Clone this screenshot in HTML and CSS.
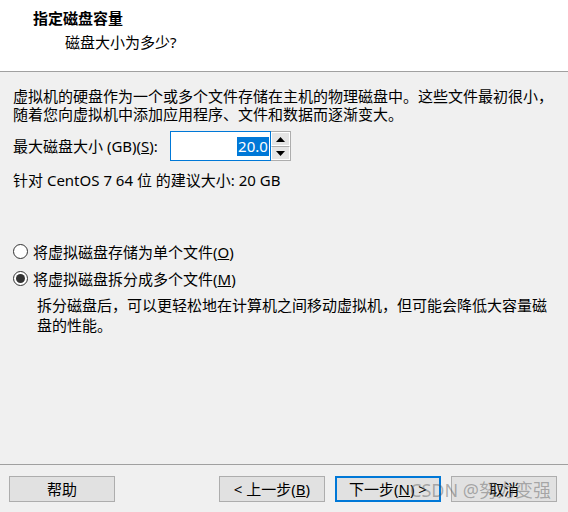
FILE: index.html
```html
<!DOCTYPE html>
<html lang="zh-CN">
<head>
<meta charset="utf-8">
<title>指定磁盘容量</title>
<link rel="stylesheet" href="styles.css">
</head>
<body>
<div class="dialog">
  <header class="header">
    <div class="title">指定磁盘容量</div>
    <div class="subtitle">磁盘大小为多少?</div>
  </header>
  <main class="content">
    <p class="intro">虚拟机的硬盘作为一个或多个文件存储在主机的物理磁盘中。这些文件最初很小，<br>随着您向虚拟机中添加应用程序、文件和数据而逐渐变大。</p>
    <div class="size-row">
      <label class="size-label">最大磁盘大小 (GB)(<u>S</u>):</label>
      <div class="spin">
        <div class="spin-input"><span class="sel">20.0</span></div>
        <div class="spin-buttons">
          <div class="spin-btn"><svg width="9" height="5" viewBox="0 0 9 5"><path d="M0 5 L4.5 0 L9 5 Z" fill="#000"/></svg></div>
          <div class="spin-btn"><svg width="9" height="5" viewBox="0 0 9 5"><path d="M0 0 L9 0 L4.5 5 Z" fill="#000"/></svg></div>
        </div>
      </div>
    </div>
    <p class="recommend">针对 CentOS 7 64 位 的建议大小: 20 GB</p>
    <div class="options">
      <div class="radio-row"><span class="radio"></span><span>将虚拟磁盘存储为单个文件(<u>O</u>)</span></div>
      <div class="radio-row"><span class="radio checked"></span><span>将虚拟磁盘拆分成多个文件(<u>M</u>)</span></div>
      <p class="note">拆分磁盘后，可以更轻松地在计算机之间移动虚拟机，但可能会降低大容量磁<br>盘的性能。</p>
    </div>
  </main>
  <footer class="footer">
    <button class="btn">帮助</button>
    <div class="spacer"></div>
    <button class="btn">&lt; 上一步(<u>B</u>)</button>
    <button class="btn default">下一步(<u>N</u>) &gt;</button>
    <button class="btn">取消</button>
    <div class="watermark">CSDN @努力变强</div>
  </footer>
</div>
</body>
</html>
```
FILE: styles.css
```css
* { box-sizing: border-box; }
html, body { margin: 0; padding: 0; }
body {
  width: 568px;
  height: 512px;
  background: #f0f0f0;
  font-family: "Noto Sans", "Noto Sans CJK SC", sans-serif;
  font-size: 15px;
  color: #000;
  overflow: hidden;
}
.dialog {
  display: flex;
  flex-direction: column;
  height: 512px;
}
.header {
  background: #fff;
  height: 72px;
  border-bottom: 1px solid #a0a0a0;
  padding: 8px 0 0 33px;
}
.title {
  font-weight: bold;
  line-height: 20px;
}
.subtitle {
  padding-left: 32px;
  margin-top: 4px;
  line-height: 20px;
}
.content {
  flex: 1;
  padding: 15px 0 0 13px;
}
p { margin: 0; }
.intro { line-height: 18px; }
.size-row {
  display: flex;
  align-items: center;
  margin-top: 8px;
}
.size-label { line-height: 20px; margin-right: 12px; }
.spin { display: flex; }
.spin-input {
  width: 101px;
  height: 30px;
  background: #fff;
  border: 1px solid #0078d7;
  display: flex;
  align-items: center;
  justify-content: flex-end;
  padding-right: 1px;
}
.sel {
  background: #0078d7;
  color: #fff;
  line-height: 19px;
  padding: 0 1px;
}
.spin-buttons {
  display: flex;
  flex-direction: column;
  width: 20px;
  height: 30px;
  border: 1px solid #adadad;
  border-left: none;
}
.spin-btn {
  flex: 1;
  display: flex;
  align-items: center;
  justify-content: center;
  background: #e5e5e5;
  border: 1px solid #fff;
}
.spin-btn + .spin-btn { border-top: 1px solid #adadad; }
.recommend { margin-top: 9px; line-height: 20px; }
.options { margin-top: 51px; }
.radio-row {
  display: flex;
  align-items: center;
  height: 20px;
  margin-bottom: 7px;
}
.radio {
  width: 15px;
  height: 15px;
  border: 1px solid #333;
  border-radius: 50%;
  background: #fff;
  margin-right: 5px;
  display: flex;
  align-items: center;
  justify-content: center;
}
.radio.checked::after {
  content: "";
  width: 9px;
  height: 9px;
  border-radius: 50%;
  background: #333;
}
.note {
  padding-left: 24px;
  line-height: 20px;
}
.footer {
  position: relative;
  height: 48px;
  border-top: 1px solid #a0a0a0;
  display: flex;
  align-items: flex-start;
  padding: 11px 11px 0 9px;
}
.spacer { flex: 1; }
.btn {
  width: 106px;
  height: 26px;
  background: #e1e1e1;
  border: 1px solid #adadad;
  font-family: inherit;
  font-size: 15px;
  color: #000;
  padding: 0;
  line-height: 22px;
}
.btn + .btn { margin-left: 10px; }
.btn.default { border: 2px solid #0078d7; }
.watermark {
  position: absolute;
  left: 410px;
  top: 14px;
  font-size: 18px;
  line-height: 22px;
  color: rgba(90, 90, 90, 0.45);
  white-space: nowrap;
}
```
